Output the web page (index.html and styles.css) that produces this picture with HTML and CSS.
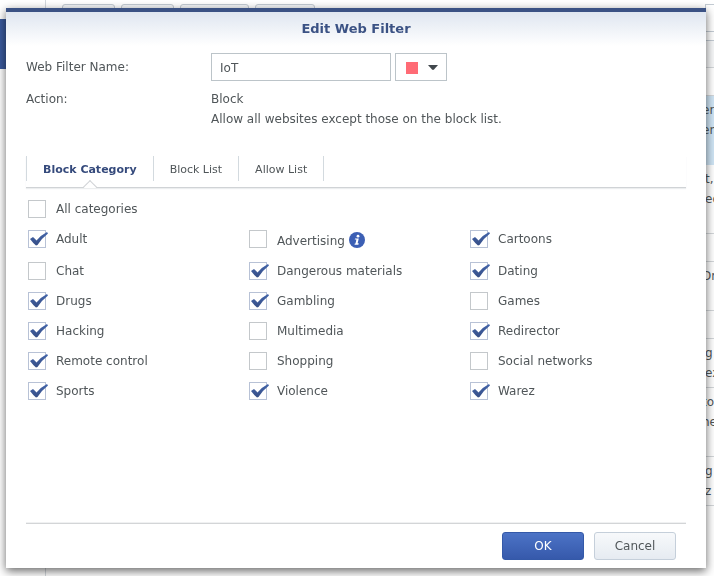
FILE: index.html
```html
<!DOCTYPE html>
<html lang="en">
<head>
<meta charset="utf-8">
<title>Edit Web Filter</title>
<link rel="stylesheet" href="styles.css">
</head>
<body>
<div class="page">
  <div class="sidebar"><div class="sidebar-active"></div></div>
  <div class="content">
    <div class="toolbar">
      <span class="tool tool-small"></span>
      <span class="tool tool-small"></span>
      <span class="tool tool-large"></span>
      <span class="tool tool-medium"></span>
      <span class="search"></span>
    </div>
    <div class="row header-row"></div>
    <div class="row short"></div>
    <div class="row selected">er<br>em</div>
    <div class="row tall narrow">t,<br>ed</div>
    <div class="row short"></div>
    <div class="row medium">Dr</div>
    <div class="row short"></div>
    <div class="row medium narrow">g<br>ex</div>
    <div class="row tall">to<br>he</div>
    <div class="row medium narrow">g<br>z</div>
  </div>
</div>

<div class="overlay">
  <form class="dialog" role="dialog" aria-labelledby="dialog-title">
    <h1 class="dialog-title" id="dialog-title">Edit Web Filter</h1>
    <div class="dialog-body">
      <div class="fields">
        <label for="filter-name">Web Filter Name:</label>
        <div class="name-controls">
          <input class="name-input" id="filter-name" type="text" value="IoT">
          <div class="color-picker">
            <select class="color-select" aria-label="Color">
              <option>Red</option>
              <option>Blue</option>
              <option>Green</option>
            </select>
            <svg class="color-caret" viewBox="0 0 10 5" aria-hidden="true"><path d="M0 0H10L6 4.5Q5 5.4 4 4.5Z"/></svg>
          </div>
        </div>
        <span>Action:</span>
        <div class="action-text">Block<br>Allow all websites except those on the block list.</div>
      </div>

      <nav class="tabs">
        <a class="tab tab-active" href="#category">Block Category</a>
        <a class="tab" href="#blocked">Block List</a>
        <a class="tab" href="#allowed">Allow List</a>
      </nav>

      <div class="categories" id="category">
        <label class="check all"><input type="checkbox">All categories</label>
        <label class="check"><input type="checkbox" checked>Adult</label>
        <label class="check with-info"><input type="checkbox"><span>Advertising</span>
          <svg class="info" viewBox="0 0 16 16" aria-hidden="true"><circle class="info-disc" cx="8" cy="8" r="8"/><circle class="info-mark" cx="9" cy="4.2" r="1.4"/><path class="info-mark" d="M6 6.4H9.8L8.6 11.3H9.7L9.4 12.7H5.5L5.8 11.5H6.5L7.4 7.6H5.8Z"/></svg>
        </label>
        <label class="check"><input type="checkbox" checked>Cartoons</label>
        <label class="check"><input type="checkbox">Chat</label>
        <label class="check"><input type="checkbox" checked>Dangerous materials</label>
        <label class="check"><input type="checkbox" checked>Dating</label>
        <label class="check"><input type="checkbox" checked>Drugs</label>
        <label class="check"><input type="checkbox" checked>Gambling</label>
        <label class="check"><input type="checkbox">Games</label>
        <label class="check"><input type="checkbox" checked>Hacking</label>
        <label class="check"><input type="checkbox">Multimedia</label>
        <label class="check"><input type="checkbox" checked>Redirector</label>
        <label class="check"><input type="checkbox" checked>Remote control</label>
        <label class="check"><input type="checkbox">Shopping</label>
        <label class="check"><input type="checkbox">Social networks</label>
        <label class="check"><input type="checkbox" checked>Sports</label>
        <label class="check"><input type="checkbox" checked>Violence</label>
        <label class="check"><input type="checkbox" checked>Warez</label>
      </div>

      <div class="actions">
        <button class="button button-primary" type="button">OK</button>
        <button class="button" type="button">Cancel</button>
      </div>
    </div>
  </form>
</div>
</body>
</html>
```
FILE: styles.css
```css
* {
  box-sizing: border-box;
}

body {
  margin: 0;
  overflow: hidden;
  background: #fff;
  color: #505659;
  font: 12px/20px Verdana, "DejaVu Sans", sans-serif;
}

.page {
  display: grid;
  grid-template-columns: 46px 1fr;
  height: 100vh;
}

.sidebar {
  padding-top: 19px;
  border-right: 1px solid #d3d8dd;
}

.sidebar-active {
  height: 50px;
  background: #3a5a9c;
}

.content {
  overflow: hidden;
}

.toolbar {
  display: flex;
  gap: 6px;
  height: 40px;
  padding: 4px 0 8px 16px;
}

.tool {
  border: 1px solid #c3cbd3;
  border-radius: 3px;
  background: #f4f6f9;
}

.tool-small { width: 53px; }
.tool-large { width: 69px; }
.tool-medium { width: 60px; }

.search {
  width: 9px;
  margin-left: auto;
  border: 1px solid #c3cbd3;
  border-right: 0;
}

.row {
  display: flow-root;
  padding: 4px 0 0 calc(100% - 12px);
  border-bottom: 1px solid #d3d7da;
  white-space: nowrap;
}

.narrow {
  padding-left: calc(100% - 9px);
}

.header-row {
  height: 28px;
  border-top: 1px solid #c3cbd3;
  background: #f7f8f9;
}

.short { height: 28px; }
.medium { height: 49px; }
.tall { height: 69px; }

.selected {
  height: 69px;
  border-bottom-color: #cfe5f5;
  background: #cfe5f5;
}

.overlay {
  position: fixed;
  inset: 0;
  display: flex;
  padding: 8px 8px 8px 6px;
}

.dialog {
  display: flex;
  flex: 1;
  flex-direction: column;
  border-top: 4px solid #3b5284;
  background: linear-gradient(#dfe6f0, #fff 34px);
  box-shadow: 0 3px 9px rgba(0, 0, 0, 0.6);
}

.dialog-title {
  margin: 0;
  padding: 7px 0 5px;
  color: #3b5284;
  font-size: 13px;
  line-height: 20px;
  text-align: center;
}

.dialog-body {
  display: flex;
  flex: 1;
  flex-direction: column;
  padding: 9px 20px 8px;
}

.fields {
  display: grid;
  grid-template-columns: 185px 1fr;
  row-gap: 8px;
  line-height: 20px;
}

.fields > label {
  line-height: 28px;
}

.name-controls {
  display: flex;
  gap: 4px;
}

.name-input {
  width: 180px;
  height: 28px;
  padding: 1px 8px 0;
  border: 1px solid #bcc4c9;
  background: #fff;
  color: inherit;
  font: inherit;
}

.color-picker {
  position: relative;
  width: 52px;
}

.color-select {
  width: 100%;
  height: 28px;
  border: 1px solid #bcc4c9;
  border-radius: 0;
  appearance: none;
  background: linear-gradient(#ff6b75, #ff6b75) 10px 8px / 12px 12px no-repeat #fff;
  color: transparent;
  font: inherit;
}

.color-caret {
  position: absolute;
  top: 12px;
  right: 9px;
  width: 10px;
  height: 5px;
  fill: #41474c;
  pointer-events: none;
}

.tabs {
  display: flex;
  height: 32px;
  margin-top: 27px;
  padding-bottom: 6px;
  border-bottom: 1px solid #d0d3d6;
  box-shadow: 0 1px 1px #eceeef;
}

.tab {
  position: relative;
  padding: 0 16px;
  border-right: 1px solid #d3dadf;
  color: inherit;
  font-size: 11px;
  line-height: 27px;
  text-decoration: none;
}

.tab-active {
  border-left: 1px solid #d3dadf;
  color: #354a7c;
  font-weight: bold;
}

.tab-active::after {
  position: absolute;
  bottom: -11px;
  left: calc(50% - 5px);
  width: 9px;
  height: 9px;
  border: 1px solid #d0d3d6;
  border-width: 1px 0 0 1px;
  background: linear-gradient(135deg, #fff 50%, transparent 50%);
  content: "";
  transform: rotate(45deg);
}

.categories {
  display: grid;
  grid-template-columns: repeat(3, 1fr);
  column-gap: 5px;
  padding: 12px 0 0 2px;
}

.check {
  display: flex;
  align-items: flex-start;
  gap: 10px;
  height: 30px;
  line-height: 18px;
}

.all {
  grid-column: 1 / -1;
}

.with-info {
  height: 32px;
}

.with-info span {
  line-height: 22px;
}

.check input {
  position: relative;
  width: 18px;
  height: 18px;
  margin: 0;
  border: 1px solid #c4c8cb;
  appearance: none;
  background: #fff;
}

.check input:checked {
  border-color: #b8c2d6;
}

.check input:checked::after {
  position: absolute;
  top: 0;
  left: 0;
  width: 20px;
  height: 17px;
  background: linear-gradient(#4568ae, #33497f);
  clip-path: path("M1 8L4 6Q6 7.500 7.500 9.500Q12 4 18 1L19 2.500Q13 7 8.500 14L7 14.500Q4 12 1 8Z");
  content: "";
}

.info {
  width: 16px;
  height: 16px;
  margin: 2px 0 0 -6px;
}

.info-disc { fill: #3c5fb4; }
.info-mark { fill: #fff; }

.actions {
  display: flex;
  justify-content: flex-end;
  gap: 10px;
  margin-top: auto;
  padding: 8px 10px 0 0;
  border-top: 1px solid #d3d5d7;
  box-shadow: 0 -1px 0 #f0f1f2;
}

.button {
  width: 82px;
  height: 28px;
  padding: 0;
  border: 1px solid #c5cfda;
  border-radius: 3px;
  background: linear-gradient(#f7f9fb, #e6ebf1);
  color: #505659;
  font: inherit;
}

.button-primary {
  border-color: #3459a8;
  background: linear-gradient(#4c73c6, #3659ab);
  color: #fff;
}
```
